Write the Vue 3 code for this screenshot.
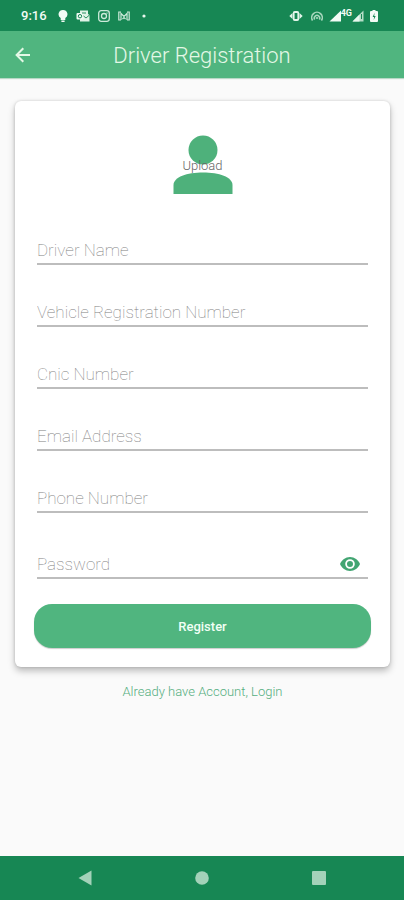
<script setup>
import { reactive, ref } from 'vue'

const fields = [
  { id: 'driver-name', label: 'Driver Name', type: 'text' },
  { id: 'vehicle-number', label: 'Vehicle Registration Number', type: 'text' },
  { id: 'cnic', label: 'Cnic Number', type: 'text' },
  { id: 'email', label: 'Email Address', type: 'email' },
  { id: 'phone', label: 'Phone Number', type: 'tel' },
  { id: 'password', label: 'Password', type: 'password' },
]
const form = reactive({})
const showPassword = ref(false)

function inputType(field) {
  return field.type === 'password' && showPassword.value ? 'text' : field.type
}
</script>

<template>
  <div class="screen">
    <div class="status">
      <div class="status-left">
        <span class="time">9:16</span>
        <svg width="10" height="14" viewBox="0 0 10 14"><path d="M5 1a4.3 4.3 0 0 0-2.3 8v2h4.6V9A4.3 4.3 0 0 0 5 1zM3.4 11.6h3.2V13H3.4z" fill="#f2fbf5" /></svg>
        <svg width="14" height="14" viewBox="0 0 14 14">
          <path d="M4 1.5h8V5l1.500 1v6.500H4z" fill="#dff3e7" />
          <rect x="0.500" y="4" width="7" height="6.500" rx="1" fill="#f0faf4" />
          <circle cx="4" cy="7.200" r="1.700" fill="none" stroke="#178754" />
          <path d="M7.500 7l2.500 2 3.500-3M6 4h4" fill="none" stroke="#178754" stroke-width="0.900" />
        </svg>
        <svg width="12" height="14" viewBox="0 0 12 14" fill="none" stroke="#cdeada" stroke-width="1.300">
          <rect x="0.700" y="1.700" width="10.600" height="10.600" rx="2.500" />
          <circle cx="6" cy="7" r="2.500" />
          <path d="M8.500 4.200h1" />
        </svg>
        <svg width="12" height="14" viewBox="0 0 12 14" fill="none" stroke="#cdeada" stroke-width="1.200">
          <path d="M3 3H.8v8H3M9 3h2.200v8H9M3 11V4.500l3 3 3-3V11M4.500 10L6 8.500 7.500 10" />
        </svg>
        <svg class="dot" width="4" height="14" viewBox="0 0 4 14"><circle cx="2" cy="7" r="1.600" fill="#e8f7ee" /></svg>
      </div>
      <div class="status-right">
        <svg width="14" height="14" viewBox="0 0 14 14" fill="none" stroke="#e3f5ea">
          <rect x="4.700" y="3" width="4.600" height="8" rx="1" stroke-width="1.800" />
          <path d="M3.500 4v6L.3 7zM10.500 4v6l3.200-3z" fill="#e3f5ea" stroke="none" />
        </svg>
        <svg class="hotspot" width="12" height="14" viewBox="0 0 12 14" fill="none" stroke="#a9d8be" stroke-width="1.600">
          <path d="M1.600 11.500a5.300 5.300 0 1 1 8.800 0M3.700 10.500a2.700 2.700 0 1 1 4.600 0" />
          <circle cx="6" cy="9" r="1.100" fill="#a9d8be" stroke="none" />
        </svg>
        <svg width="12" height="14" viewBox="0 0 12 14"><path d="M12 1.500V12.500H.5z" fill="#f2fbf5" /></svg>
        <span class="net">4G</span>
        <svg width="12" height="14" viewBox="0 0 12 14">
          <path d="M11.500 1.500v11H.5z" fill="#b5dec7" />
          <path d="M7.500 5.500v7h-7z" fill="#e8f7ee" />
          <path d="M9.500 5v5" stroke="#178754" />
        </svg>
        <svg class="battery" width="8" height="14" viewBox="0 0 8 14">
          <path d="M2.500 1h3v1H7q1 0 1 1v9q0 1-1 1H1q-1 0-1-1V3q0-1 1-1h1.500z" fill="#f2fbf5" />
          <path d="M4.600 3.800L2.600 8h1.500l-.4 3L5.700 7H4.200z" fill="#178754" />
        </svg>
      </div>
    </div>

    <header class="appbar">
      <button class="back" type="button" aria-label="Back">
        <svg width="16" height="16" viewBox="0 0 16 16" fill="none" stroke="#e4f8e6" stroke-width="2"><path d="M15 8H2M8.300 1.300L1.600 8l6.700 6.700" /></svg>
      </button>
      <h1>Driver Registration</h1>
    </header>

    <main>
      <form class="card" @submit.prevent>
        <button class="upload" type="button">
          <svg width="60" height="60" viewBox="0 0 60 60" fill="#4eb17b">
            <circle cx="30" cy="15" r="14.500" />
            <path d="M.5 59V50C.5 42 14 37.500 30 37.500S59.500 42 59.500 50v9z" />
          </svg>
          <span>Upload</span>
        </button>

        <div class="fields">
          <div v-for="field in fields" :key="field.id" class="field" :class="{ secret: field.type === 'password' }">
            <input
              :id="field.id"
              v-model="form[field.id]"
              :type="inputType(field)"
              :placeholder="field.label"
              :aria-label="field.label"
            />
            <button
              v-if="field.type === 'password'"
              class="eye"
              type="button"
              aria-label="Show password"
              @click="showPassword = !showPassword"
            >
              <svg width="20" height="14" viewBox="0 0 20 14">
                <path d="M10 0C5.500 0 1.700 2.900 0 7c1.700 4.100 5.500 7 10 7s8.300-2.900 10-7c-1.700-4.100-5.500-7-10-7z" fill="#42a572" />
                <circle cx="10" cy="7" r="3.900" fill="#42a572" stroke="#fff" stroke-width="1.800" />
              </svg>
            </button>
          </div>
        </div>

        <button class="register" type="submit">Register</button>
      </form>
      <a class="login" href="#login">Already have Account, Login</a>
    </main>

    <nav class="navbar" aria-label="System">
      <button type="button" aria-label="Back"><svg width="14" height="16" viewBox="0 0 14 16"><path d="M13.500.5v15L.5 8z" fill="#a3d2b9" /></svg></button>
      <button type="button" aria-label="Home"><svg width="14" height="16" viewBox="0 0 14 16"><circle cx="7" cy="8" r="6.800" fill="#a3d2b9" /></svg></button>
      <button type="button" aria-label="Recents"><svg width="14" height="16" viewBox="0 0 14 16"><rect y="1" width="14" height="14" rx="1" fill="#a3d2b9" /></svg></button>
    </nav>
  </div>
</template>

<style>
body {
  margin: 0;
  background: #fafafa;
}
</style>

<style scoped>
.screen {
  min-height: 100vh;
  display: flex;
  flex-direction: column;
  background: #fafafa;
  font-family: Roboto, "Liberation Sans", sans-serif;
}
button {
  border: 0;
  padding: 0;
  background: none;
  font-family: inherit;
  cursor: pointer;
}
svg {
  display: block;
}
.status {
  height: 31px;
  display: flex;
  align-items: center;
  justify-content: space-between;
  padding: 0 26px 0 21px;
  background: #178754;
  color: #f2fbf5;
}
.status-left,
.status-right {
  display: flex;
  align-items: center;
}
.status-left {
  gap: 8px;
}
.time {
  margin-right: 3px;
  font-size: 13px;
  font-weight: 500;
}
.dot {
  margin-left: 4px;
}
.hotspot {
  margin: 0 6px 0 8px;
}
.net {
  align-self: flex-start;
  font-size: 9px;
  line-height: 9px;
  font-weight: 700;
}
.battery {
  margin-left: 6px;
}
.appbar {
  height: 47px;
  display: grid;
  grid-template-columns: 48px 1fr 48px;
  align-items: center;
  background: #50b57f;
  box-shadow: 0 1px 1px #b8d8c6;
}
.back {
  height: 47px;
  padding-left: 15px;
}
h1 {
  margin: 0;
  padding-top: 3px;
  text-align: center;
  font-size: 22px;
  line-height: 28px;
  font-weight: 300;
  color: #e4f8e6;
}
main {
  flex: 1;
  display: flex;
  flex-direction: column;
  padding: 23px 14px 0 15px;
}
.card {
  display: flex;
  flex-direction: column;
  padding: 34px 19px 19px;
  border-radius: 6px;
  background: #fff;
  box-shadow: 0 4px 7px rgba(0, 0, 0, 0.25), 0 0 3px rgba(0, 0, 0, 0.16);
}
.upload {
  align-self: center;
  display: grid;
  place-items: center;
}
.upload > * {
  grid-area: 1 / 1;
}
.upload span {
  font-size: 13px;
  font-weight: 300;
  color: #666;
}
.fields {
  display: grid;
  gap: 32px;
  margin: 40px 3px 25px;
}
.field {
  display: flex;
  height: 28px;
  border-bottom: 2px solid #bdbdbd;
}
.secret {
  padding-top: 4px;
}
input {
  flex: 1;
  min-width: 0;
  padding: 2px 0 0;
  border: 0;
  outline: 0;
  background: none;
  font-family: inherit;
  font-size: 17px;
  font-weight: 100;
  color: #444;
}
input::placeholder {
  color: #808080;
  opacity: 1;
}
.eye {
  padding: 2px 8px 0;
}
.register {
  height: 44px;
  border-radius: 18px;
  background: #50b57f;
  box-shadow: 0 1px 1px rgba(0, 0, 0, 0.2);
  color: #f1fff5;
  font-size: 13px;
  font-weight: 500;
}
.login {
  align-self: center;
  margin-top: 16px;
  font-size: 13px;
  line-height: 18px;
  font-weight: 300;
  color: #55ae80;
  text-decoration: none;
}
.navbar {
  height: 44px;
  display: flex;
  align-items: center;
  justify-content: center;
  gap: 101px;
  background: #178754;
}
.navbar button {
  padding: 0 1px;
}
</style>
